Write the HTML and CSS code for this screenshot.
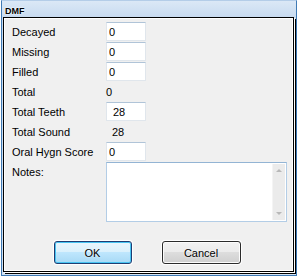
FILE: index.html
```html
<!DOCTYPE html>
<html lang="en">
<head>
    <meta charset="UTF-8">
    <title>DMF</title>
    <link rel="stylesheet" href="styles.css">
</head>
<body>
    <div class="window">
        <div class="titlebar"><span class="title">DMF</span></div>

        <div class="client">
            <div class="form">
                <label class="field-label">Decayed</label>
                <input class="textbox" type="text" value="0">

                <label class="field-label">Missing</label>
                <input class="textbox" type="text" value="0">

                <label class="field-label">Filled</label>
                <input class="textbox" type="text" value="0">

                <label class="field-label">Total</label>
                <span class="value">0</span>

                <label class="field-label">Total Teeth</label>
                <input class="textbox textbox-indent" type="text" value="28">

                <label class="field-label">Total Sound</label>
                <span class="value value-indent">28</span>

                <label class="field-label">Oral Hygn Score</label>
                <input class="textbox" type="text" value="0">

                <label class="field-label notes-label">Notes:</label>
                <div class="notes">
                    <div class="notes-text"></div>
                    <!-- disabled vertical scrollbar -->
                    <div class="scrollbar">
                        <span class="arrow arrow-up"></span>
                        <span class="arrow arrow-down"></span>
                    </div>
                </div>
            </div>

            <div class="buttons">
                <button class="btn btn-default">OK</button>
                <button class="btn">Cancel</button>
            </div>
        </div>
    </div>
</body>
</html>
```

FILE: styles.css
```css
body {
    margin: 0;
    background: #fff;
    font-family: "Liberation Sans", Arial, sans-serif;
    font-size: 11px;
    color: #000;
}

.window {
    width: 296px;
    height: 276px;
    margin-left: 1px;
    box-sizing: border-box;
    border: 1px solid #3f7ab5;
    border-top-color: #b4cde8;
    padding-left: 1px;
    background: linear-gradient(#dbe8f6, #c8dbf0 16px, #d2e2f3);
}

.titlebar {
    height: 16px;
    box-sizing: border-box;
    padding: 3px 0 0 2px;
}

.title {
    font-size: 9px;
    font-weight: bold;
    line-height: 9px;
    text-shadow: 0 0 2px #fff, 0 0 2px #fff;
}

.client {
    width: 291px;
    height: 255px;
    box-sizing: border-box;
    border: 1px solid #000;
    background: #f0f0f0;
    box-shadow: inset 1px 1px 0 #fff, inset -1px -1px 0 #fff, 1px 1px 0 #fff, 2px 2px 0 #000;
    padding: 4px 0 0 8px;
}

.form {
    display: grid;
    grid-template-columns: 94px auto;
    grid-auto-rows: 19px;
    row-gap: 1px;
}

.field-label {
    align-self: center;
    white-space: nowrap;
}

.notes-label {
    align-self: start;
    padding-top: 4px;
}

.textbox {
    width: 40px;
    height: 19px;
    box-sizing: border-box;
    margin: 0;
    border: 1px solid #e0e6ec;
    border-top-color: #b0c4d8;
    background: #fff;
    padding: 0 0 0 2px;
    font: inherit;
    color: #000;
    outline: none;
}

.textbox-indent {
    padding-left: 6px;
}

.value {
    align-self: center;
}

.value-indent {
    padding-left: 6px;
}

.notes {
    grid-row: span 3;
    width: 181px;
    height: 60px;
    box-sizing: border-box;
    border: 1px solid #b3cde6;
    border-top-color: #93b4d4;
    background: #fff;
    display: flex;
    justify-content: space-between;
    padding: 1px 1px 1px 0;
}

.scrollbar {
    width: 12px;
    background: #ebebeb;
    border-left: 1px solid #f4f4f4;
    display: flex;
    flex-direction: column;
    justify-content: space-between;
    align-items: center;
    padding: 5px 0;
}

.arrow {
    width: 0;
    height: 0;
    border-left: 3px solid transparent;
    border-right: 3px solid transparent;
}

.arrow-up {
    border-bottom: 3px solid #b8b8b8;
}

.arrow-down {
    border-top: 3px solid #b8b8b8;
}

.buttons {
    display: flex;
    justify-content: center;
    gap: 30px;
    margin: 20px 0 0 -8px;
    padding-right: 3px;
}

.btn {
    width: 79px;
    height: 23px;
    box-sizing: border-box;
    border: 1px solid #2b2b2b;
    border-radius: 3px;
    background: linear-gradient(#f2f2f2, #ebebeb 50%, #dddddd 50%, #cfcfcf);
    box-shadow: inset 0 0 0 1px #fcfcfc, 0 0 1px 1px #fff;
    font: inherit;
    color: #000;
    text-shadow: 0 0 2px #fff;
    padding: 0;
}

.btn-default {
    width: 78px;
    border-color: #1f3d72;
    background: linear-gradient(#eaf6fd, #d9f0fc 50%, #bee6fd 50%, #a7d9f5);
    box-shadow: inset 0 0 0 1px #48c4f2, 0 0 1px 1px #fff;
}
```
